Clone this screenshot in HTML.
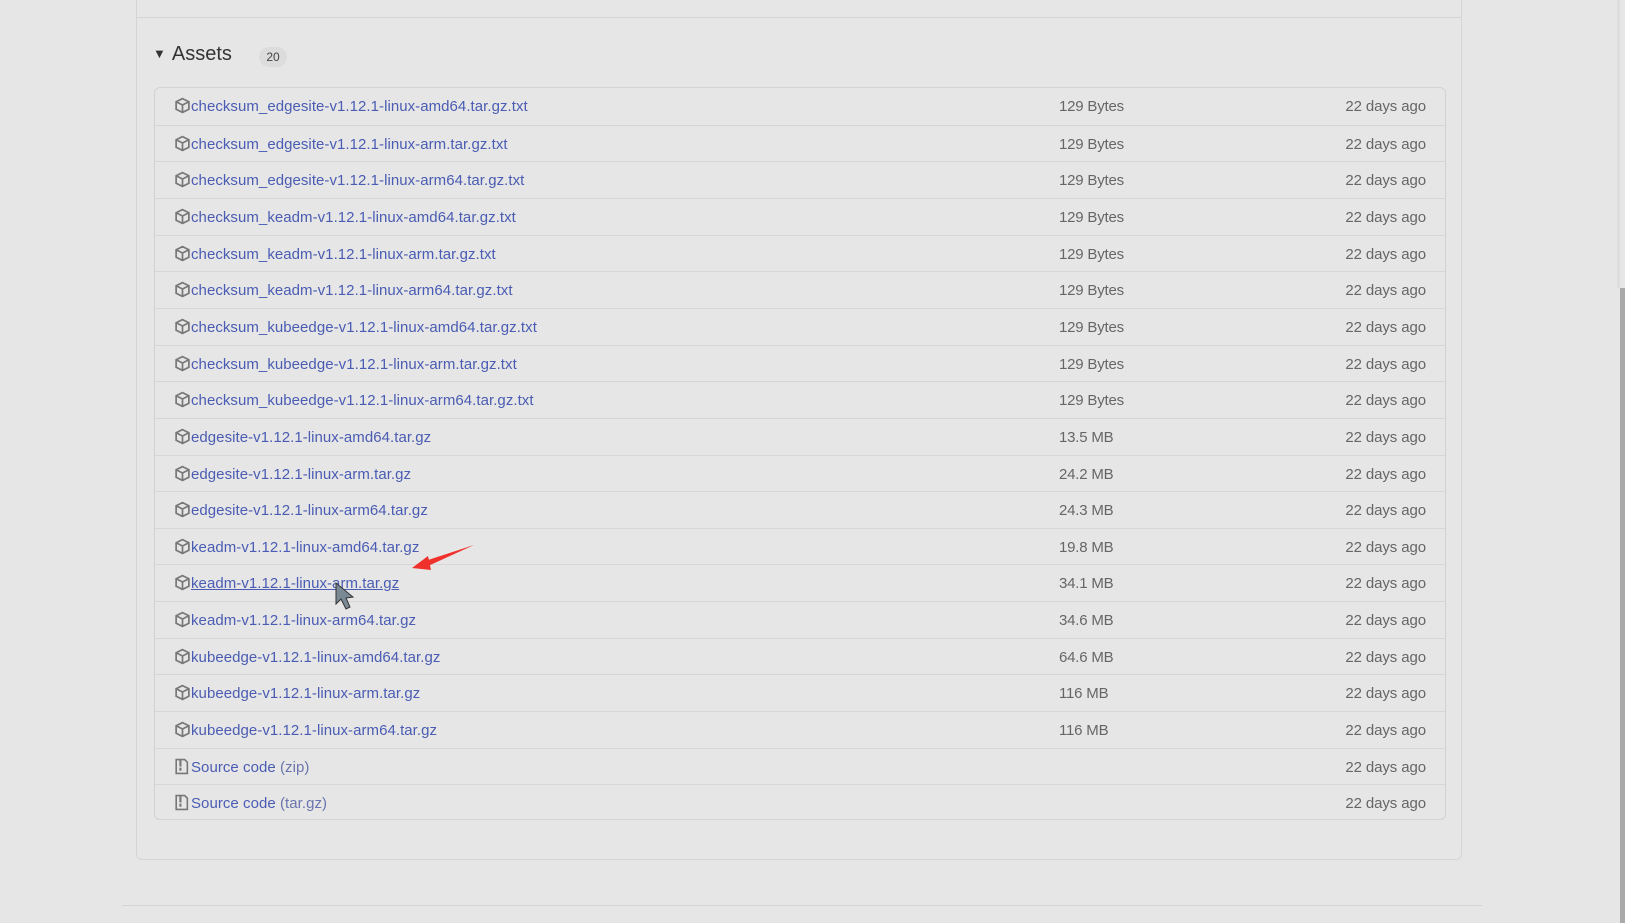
<!DOCTYPE html>
<html><head><meta charset="utf-8"><style>
html,body{margin:0;padding:0;}
body{width:1625px;height:923px;background:#e6e6e6;position:relative;overflow:hidden;font-family:"Liberation Sans","DejaVu Sans",sans-serif;}
.card{position:absolute;left:136px;top:-5px;width:1326px;height:865px;border:1px solid #d5d5d5;border-radius:6px;box-sizing:border-box;}
.topline{position:absolute;left:137px;top:17px;width:1324px;height:1px;background:#d5d5d5;}
.h{position:absolute;left:153px;top:43px;font-size:20px;color:#333;}
.h .tri{font-size:13px;position:relative;top:-2px;margin-right:6px;}
.badge{position:absolute;left:259px;top:47px;width:28px;height:20px;border-radius:10px;background:#dcdcdc;font-size:12px;color:#444;text-align:center;line-height:21px;}
.tbl{position:absolute;left:154px;top:87px;width:1292px;height:733px;border:1px solid #d3d3d3;border-radius:6px;box-sizing:border-box;}
.row{position:absolute;left:0;width:1290px;height:36.65px;border-top:1px solid #d6d6d6;box-sizing:border-box;}
.row:first-child{border-top:none;}
.ic{position:absolute;left:19px;top:9px;}
.nm{position:absolute;left:36px;top:10px;font-size:15px;letter-spacing:0.05px;color:#4a5cb3;white-space:nowrap;}
.nm.u{text-decoration:underline;}
.nm .g{color:#6a75ad;}
.sz{position:absolute;left:904px;top:10px;font-size:15px;letter-spacing:-0.2px;color:#666;}
.dt{position:absolute;right:19px;top:10px;font-size:15px;letter-spacing:-0.1px;color:#666;}
.foot{position:absolute;left:122px;top:905px;width:1360px;height:1px;background:#d5d5d5;}
.sb{position:absolute;left:1620px;top:288px;width:5px;height:635px;background:#aaa;}
.sbt{position:absolute;left:1617px;top:0;width:3px;height:288px;background:#dedede;}
</style></head><body>
<div class="card"></div><div class="topline"></div>
<div class="h"><span class="tri">▼</span>Assets</div>
<div class="badge">20</div>
<div class="tbl" id="t"></div>
<div class="foot"></div>
<div class="sbt"></div><div class="sb"></div>
<svg style="position:absolute;left:0;top:0" width="1625" height="923">
<path d="M474 545 L425 561 L428 566 Z" fill="#f0302a"/>
<path d="M412 568 L428 556 L431 570 Z" fill="#f0302a"/>
<path d="M336 583 L336 604 L341 599 L346 609 L350 607 L346 598 L353 597 Z" fill="#7a8a95" stroke="#333" stroke-width="1"/>
</svg>
<script>
var cube='<svg class="ic" width="17" height="17" viewBox="0 0 16 16"><path d="M8 1.5 L14 4.5 V11.5 L8 14.5 L2 11.5 V4.5 Z M2 4.5 L8 7.5 L14 4.5 M8 7.5 V14.5" fill="none" stroke="#777" stroke-width="1.6"/></svg>';
var zip='<svg class="ic" width="15" height="17" viewBox="0 0 14 16"><path d="M2 1.5 H10 L12.5 4 V14.5 H2 Z" fill="none" stroke="#777" stroke-width="1.5"/><path d="M6 2 V8 M6 9 V12" stroke="#777" stroke-width="2"/></svg>';
var rows=[["checksum_edgesite-v1.12.1-linux-amd64.tar.gz.txt","129 Bytes"],["checksum_edgesite-v1.12.1-linux-arm.tar.gz.txt","129 Bytes"],["checksum_edgesite-v1.12.1-linux-arm64.tar.gz.txt","129 Bytes"],["checksum_keadm-v1.12.1-linux-amd64.tar.gz.txt","129 Bytes"],["checksum_keadm-v1.12.1-linux-arm.tar.gz.txt","129 Bytes"],["checksum_keadm-v1.12.1-linux-arm64.tar.gz.txt","129 Bytes"],["checksum_kubeedge-v1.12.1-linux-amd64.tar.gz.txt","129 Bytes"],["checksum_kubeedge-v1.12.1-linux-arm.tar.gz.txt","129 Bytes"],["checksum_kubeedge-v1.12.1-linux-arm64.tar.gz.txt","129 Bytes"],["edgesite-v1.12.1-linux-amd64.tar.gz","13.5 MB"],["edgesite-v1.12.1-linux-arm.tar.gz","24.2 MB"],["edgesite-v1.12.1-linux-arm64.tar.gz","24.3 MB"],["keadm-v1.12.1-linux-amd64.tar.gz","19.8 MB"],["keadm-v1.12.1-linux-arm.tar.gz","34.1 MB"],["keadm-v1.12.1-linux-arm64.tar.gz","34.6 MB"],["kubeedge-v1.12.1-linux-amd64.tar.gz","64.6 MB"],["kubeedge-v1.12.1-linux-arm.tar.gz","116 MB"],["kubeedge-v1.12.1-linux-arm64.tar.gz","116 MB"],["Source code <span class='g'>(zip)</span>",""],["Source code <span class='g'>(tar.gz)</span>",""]];
var h='';
rows.forEach(function(r,i){h+='<div class="row" style="top:'+(i*36.65)+'px">'+(i>=18?zip:cube)+'<span class="nm'+(i==13?' u':'')+'">'+r[0]+'</span><span class="sz">'+r[1]+'</span><span class="dt">22 days ago</span></div>';});
document.getElementById('t').innerHTML=h;
</script>
</body></html>
